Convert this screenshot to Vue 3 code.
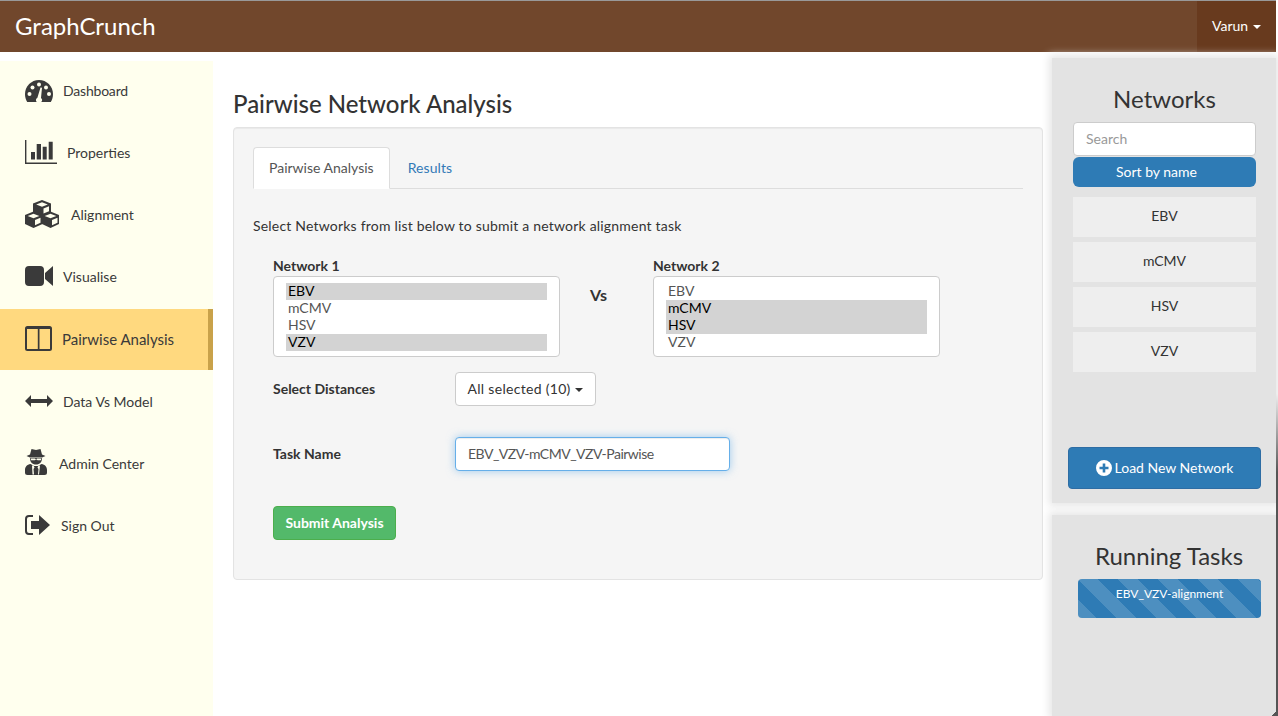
<script setup>
const navItems = [
  { label: 'Dashboard', icon: 'dash' },
  { label: 'Properties', icon: 'bars' },
  { label: 'Alignment', icon: 'cubes' },
  { label: 'Visualise', icon: 'video' },
  { label: 'Pairwise Analysis', icon: 'cols', active: true },
  { label: 'Data Vs Model', icon: 'arrows' },
  { label: 'Admin Center', icon: 'spy' },
  { label: 'Sign Out', icon: 'out' }
]
const list1 = [
  { n: 'EBV', s: true }, { n: 'mCMV' }, { n: 'HSV' }, { n: 'VZV', s: true }
]
const list2 = [
  { n: 'EBV' }, { n: 'mCMV', s: true }, { n: 'HSV', s: true }, { n: 'VZV' }
]
const networks = ['EBV', 'mCMV', 'HSV', 'VZV']
</script>

<template>
  <div class="page">
    <header class="topbar">
      <div class="brand">GraphCrunch</div>
      <div class="user">Varun <span class="caret white"></span></div>
    </header>
    <div class="layout">
      <aside class="sidebar">
        <a v-for="item in navItems" :key="item.label" class="nav-item" :class="['i-' + item.icon, { active: item.active }]">
          <svg v-if="item.icon === 'dash'" class="nav-icon" width="28" height="22" viewBox="0 0 28 22">
            <path fill="#3a3a3a" d="M14 0C6.300 0 0 6.300 0 14c0 3 .8 5.700 2.200 8h23.600c1.400-2.300 2.200-5 2.200-8C28 6.300 21.700 0 14 0z"/>
            <g fill="#ffffee">
              <circle cx="14" cy="4.500" r="2"/><circle cx="7.500" cy="7.500" r="2"/><circle cx="21" cy="7.500" r="2"/>
              <circle cx="4.500" cy="14" r="2"/><circle cx="24" cy="14" r="2"/>
              <path d="M15.500 7.500l1.500.3-1 10.200a2.900 2.900 0 1 1-3.600-.3z"/>
            </g>
          </svg>
          <svg v-else-if="item.icon === 'bars'" class="nav-icon" width="32" height="24" viewBox="0 0 32 24" fill="#3a3a3a">
            <path d="M0 0h1.400v22.400H32V24H0zM6 12h4v7.500H6zM11.700 4H16v15.500h-4.300zM17.700 6.700h4v12.800h-4zM23.700 1.700h4v17.800h-4z"/>
          </svg>
          <svg v-else-if="item.icon === 'cubes'" class="nav-icon" width="34" height="28" viewBox="0 0 34 28">
            <g fill="#3a3a3a">
              <path d="M17 0l9 3.500V13l-9 4-9-4V3.500z"/>
              <path d="M8.500 11.500l9 3.500v9l-9 4-8.500-4v-9z"/>
              <path d="M25.500 11.500l8.500 3.500v9l-8.500 4-8.500-4v-9z"/>
            </g>
            <g fill="#ffffee">
              <path d="M17 2.200l5.800 2.300L17 6.800l-5.800-2.300z"/>
              <path d="M8.500 13.700l5.800 2.300-5.800 2.300L2.700 16z"/>
              <path d="M25.500 13.700l5.800 2.300-5.800 2.300-5.800-2.300z"/>
              <path d="M18.500 8.500l5.500-2.200v5l-5.500 2.300z"/>
              <path d="M10 20l5.500-2.200v5L10 25.200z"/>
              <path d="M27 20l5.500-2.200v5L27 25.200z"/>
            </g>
          </svg>
          <svg v-else-if="item.icon === 'video'" class="nav-icon" width="28" height="20" viewBox="0 0 28 20" fill="#3a3a3a">
            <path d="M0 4a4 4 0 0 1 4-4h11a4 4 0 0 1 4 4v12a4 4 0 0 1-4 4H4a4 4 0 0 1-4-4zM20 7l8-7v20l-8-7z"/>
          </svg>
          <svg v-else-if="item.icon === 'cols'" class="nav-icon" width="27" height="25" viewBox="0 0 27 25" fill="#3a3a3a">
            <path fill-rule="evenodd" d="M2.500 0h22A2.500 2.500 0 0 1 27 2.500v20a2.500 2.500 0 0 1-2.500 2.500h-22A2.500 2.500 0 0 1 0 22.500v-20A2.500 2.500 0 0 1 2.500 0zM2 3v20h10.800V3zm12.500 0v20H25V3z"/>
          </svg>
          <svg v-else-if="item.icon === 'arrows'" class="nav-icon" width="28" height="12" viewBox="0 0 28 12" fill="#3a3a3a">
            <path d="M0 6l6-6v4h16V0l6 6-6 6V8H6v4z"/>
          </svg>
          <svg v-else-if="item.icon === 'spy'" class="nav-icon" width="22" height="26" viewBox="0 0 22 26">
            <path fill="#3a3a3a" d="M6.500 0l4.500 1L15.500 0l1.500 5.500 3.500 1.500-3.500 1.500H5L1.500 7 5 5.500z"/>
            <path fill="#3a3a3a" d="M5 9h12c.3 3.800-2.300 6.500-6 6.500S4.700 12.800 5 9z"/>
            <path fill="#3a3a3a" d="M5.500 15C2 15.500 0 18 0 21v2.500A2.500 2.500 0 0 0 2.500 26h17a2.500 2.500 0 0 0 2.500-2.500V21c0-3-2-5.500-5.500-6L13 17H9z"/>
            <path fill="#ffffee" d="M7 16.500l1.500 0 1 2-1 1.500 .5 5.500H7.500zM15 16.500l-1.500 0-1 2 1 1.500-.5 5.500h1z"/>
            <path fill="#ffffee" d="M5.500 9.500h4.500l1 1 1-1h4.500l-.6 1.800h-3.200l-1.500-.8-1.500.8H6.100z"/>
          </svg>
          <svg v-else class="nav-icon" width="25" height="20" viewBox="0 0 25 20" fill="#3a3a3a">
            <path d="M8 0H4a4 4 0 0 0-4 4v12a4 4 0 0 0 4 4h4v-2H4a2 2 0 0 1-2-2V4a2 2 0 0 1 2-2h4zM6 6h8V0l11 10-11 10v-6H6z"/>
          </svg>
          <span class="nav-label">{{ item.label }}</span>
        </a>
      </aside>

      <main class="main">
        <h1 class="title">Pairwise Network Analysis</h1>
        <section class="well">
          <div class="tabs">
            <div class="tab current">Pairwise Analysis</div>
            <div class="tab link">Results</div>
          </div>
          <p class="intro">Select Networks from list below to submit a network alignment task</p>
          <div class="picker-row">
            <div class="picker">
              <label class="bold picker-label">Network 1</label>
              <div class="listbox">
                <div v-for="o in list1" :key="o.n" class="opt" :class="{ sel: o.s }">{{ o.n }}</div>
              </div>
            </div>
            <div class="vs">Vs</div>
            <div class="picker">
              <label class="bold picker-label">Network 2</label>
              <div class="listbox">
                <div v-for="o in list2" :key="o.n" class="opt" :class="{ sel: o.s }">{{ o.n }}</div>
              </div>
            </div>
          </div>
          <div class="field dist">
            <label class="bold field-label">Select Distances</label>
            <button class="dropdown">All selected (10) <span class="caret"></span></button>
          </div>
          <div class="field task">
            <label class="bold field-label">Task Name</label>
            <div class="task-input">EBV_VZV-mCMV_VZV-Pairwise</div>
          </div>
          <button class="submit">Submit Analysis</button>
        </section>
      </main>

      <aside class="rail">
        <section class="panel networks">
          <h2 class="panel-title">Networks</h2>
          <div class="search">Search</div>
          <div class="sort">Sort by name</div>
          <div v-for="n in networks" :key="n" class="net">{{ n }}</div>
          <button class="load">
            <svg class="plus" viewBox="0 0 16 16"><path fill="#fff" fill-rule="evenodd" d="M8 0a8 8 0 1 1 0 16A8 8 0 0 1 8 0zM6.700 3.500v3.200H3.500v2.600h3.200v3.200h2.600V9.300h3.200V6.700H9.300V3.500z"/></svg>
            <span>Load New Network</span>
          </button>
        </section>
        <section class="panel tasks">
          <h2 class="panel-title">Running Tasks</h2>
          <div class="progress">EBV_VZV-alignment</div>
        </section>
      </aside>
    </div>
  </div>
</template>

<style>
html, body { margin: 0; background: #fff; overflow: hidden; }
</style>

<style scoped>
.page {
  position: relative;
  width: 1278px;
  height: 716px;
  box-sizing: border-box;
  padding-right: 2px;
  overflow: hidden;
  font-family: "Lato", "Noto Sans", sans-serif;
  font-size: 14px;
  color: #333;
  display: flex;
  flex-direction: column;
}
.page::after {
  content: "";
  position: absolute;
  right: 0;
  top: 0;
  bottom: 0;
  width: 2px;
  background: linear-gradient(to bottom, transparent 55%, #555 66%);
}
.topbar {
  height: 51px;
  flex: none;
  background: #71472c;
  border-top: 1px solid #999;
  display: flex;
  justify-content: space-between;
  color: #fff;
}
.brand { font-size: 24px; line-height: 50px; padding-left: 15px; }
.user {
  width: 79px;
  padding-left: 15px;
  box-sizing: border-box;
  background: #683a1e;
  line-height: 50px;
  white-space: nowrap;
}
.caret {
  display: inline-block;
  width: 0;
  height: 0;
  margin-left: 1px;
  vertical-align: middle;
  border-top: 4px solid #333;
  border-left: 4px solid transparent;
  border-right: 4px solid transparent;
}
.caret.white { border-top-color: #fff; }
.layout { flex: 1; display: flex; min-height: 0; }
.sidebar {
  width: 213px;
  flex: none;
  margin-top: 9px;
  background: #ffffee;
}
.nav-item {
  height: 62px;
  box-sizing: border-box;
  padding-left: 25px;
  display: flex;
  align-items: center;
  color: #3a3a3a;
}
.nav-item.active {
  height: 61px;
  margin-bottom: 1px;
  background: #ffd97f;
  border-right: 5px solid #c9a24a;
}
.nav-icon { flex: none; }
.nav-label { padding-bottom: 2px; }
.i-dash .nav-label, .i-bars .nav-label, .i-cubes .nav-label, .i-video .nav-label { padding-bottom: 4px; }
.i-dash .nav-label { margin-left: 10px; letter-spacing: -.2px; }
.i-dash .nav-icon { margin-bottom: 2px; }
.i-bars .nav-label { margin-left: 10px; }
.i-bars .nav-icon { margin-bottom: 4px; }
.i-cubes .nav-label { margin-left: 12px; }
.i-cubes .nav-icon { margin-bottom: 4px; }
.i-video .nav-label { margin-left: 10px; }
.i-video .nav-icon { margin-bottom: 4px; }
.i-cols .nav-label { margin-left: 10px; font-size: 15px; padding-bottom: 2px; }
.i-cols .nav-icon { margin-bottom: 2px; }
.i-arrows .nav-label { margin-left: 10px; }
.i-arrows .nav-icon { margin-bottom: 2px; }
.i-spy .nav-label { margin-left: 12px; }
.i-spy .nav-icon { margin-bottom: 4px; }
.i-out .nav-label { margin-left: 11px; }
.i-out .nav-icon { margin-bottom: 2px; }
.main { width: 810px; margin-left: 20px; flex: none; }
.title {
  margin: 37px 0 8px;
  font-size: 24px;
  line-height: 30px;
  font-weight: 500;
}
.well {
  height: 453px;
  box-sizing: border-box;
  padding: 19px;
  background: #f5f5f5;
  border: 1px solid #e3e3e3;
  border-radius: 4px;
  box-shadow: inset 0 1px 1px rgba(0, 0, 0, .05);
}
.tabs {
  display: flex;
  height: 41px;
  border-bottom: 1px solid #ddd;
}
.tab { padding: 0 15px; height: 42px; line-height: 42px; box-sizing: border-box; margin-right: 3px; }
.tab.current {
  background: #fff;
  border: 1px solid #ddd;
  border-bottom-color: #fff;
  border-radius: 4px 4px 0 0;
  color: #555;
  line-height: 40px;
}
.tab.link { color: #337ab7; letter-spacing: .1px; }
.intro { margin: 27px 0 0; line-height: 20px; letter-spacing: .2px; }
.bold { font-weight: 700; }
.picker-row { display: flex; margin: 20px 0 0 20px; }
.picker { width: 287px; }
.picker-label { display: block; line-height: 20px; }
.listbox {
  height: 81px;
  box-sizing: border-box;
  padding: 6px 12px 0;
  background: #fff;
  border: 1px solid #ccc;
  border-radius: 4px;
  color: #555;
}
.opt { height: 17px; line-height: 15px; padding-left: 2px; }
.opt.sel { background: #d3d3d3; color: #000; }
.vs { width: 93px; font-size: 16px; font-weight: 700; line-height: 20px; padding: 29px 0 0 30px; box-sizing: border-box; color: #333; }
.field { display: flex; align-items: center; margin-left: 20px; }
.field-label { width: 182px; flex: none; padding-bottom: 2px; }
.dist { margin-top: 15px; }
.task { margin-top: 31px; }
.dropdown {
  width: 141px;
  height: 34px;
  padding: 0 0 2px;
  background: #fff;
  border: 1px solid #ccc;
  border-radius: 4px;
  font: inherit;
  letter-spacing: .3px;
  color: #333;
}
.task-input {
  width: 275px;
  height: 34px;
  line-height: 32px;
  box-sizing: border-box;
  padding: 0 12px;
  background: #fff;
  border: 1px solid #66afe9;
  border-radius: 4px;
  color: #555;
  letter-spacing: -.5px;
  box-shadow: inset 0 1px 1px rgba(0, 0, 0, .075), 0 0 8px rgba(102, 175, 233, .6);
}
.submit {
  display: block;
  width: 123px;
  height: 34px;
  margin: 35px 0 0 20px;
  padding: 0 0 2px;
  background: #53b96a;
  border: 1px solid #4cae4c;
  border-radius: 4px;
  color: #fff;
  font: inherit;
  font-weight: 700;
}
.rail { width: 224px; margin-left: 9px; margin-top: 6px; flex: none; display: flex; flex-direction: column; gap: 12px; }
.panel {
  background: #e3e3e3;
  box-shadow: 0 0 8px 3px #e6e6e6;
  box-sizing: border-box;
  text-align: center;
}
.networks { height: 445px; padding: 26px 20px 0 21px; }
.tasks {
  flex: 1;
  padding-top: 26px;
  background: linear-gradient(135deg, transparent 50%, #555 50%) right bottom / 4px 4px no-repeat, #e3e3e3;
}
.tasks .panel-title { padding-left: 10px; }
.panel-title { margin: 0; font-size: 24px; font-weight: 400; line-height: 30px; color: #333; }
.networks .panel-title { margin-bottom: 8px; }
.search {
  height: 34px;
  box-sizing: border-box;
  padding: 0 12px;
  line-height: 32px;
  text-align: left;
  color: #999;
  background: #fff;
  border: 1px solid #ccc;
  border-radius: 4px;
}
.sort {
  height: 30px;
  margin-top: 1px;
  line-height: 30px;
  background: #2e7bb5;
  color: #fff;
  border-radius: 6px;
  text-align: left;
  padding-left: 43px;
  margin-bottom: 10px;
}
.net {
  height: 40px;
  line-height: 38px;
  margin-bottom: 5px;
  background: #eee;
}
.load {
  width: 193px;
  height: 42px;
  margin: 75px 0 0 -5px;
  padding: 0 0 2px;
  background: #2e7bb5;
  border: 1px solid #2e6da4;
  border-radius: 4px;
  color: #fff;
  font: inherit;
  display: flex;
  align-items: center;
  justify-content: center;
  gap: 3px;
}
.plus { width: 16px; height: 16px; margin-top: 2px; }
.progress {
  width: 183px;
  height: 39px;
  margin: 8px 0 0 26px;
  line-height: 30px;
  font-size: 12px;
  color: #fff;
  background-color: #2e7bb5;
  background-image: linear-gradient(45deg, rgba(255,255,255,.15) 25%, transparent 25%, transparent 50%, rgba(255,255,255,.15) 50%, rgba(255,255,255,.15) 75%, transparent 75%, transparent);
  background-size: 40px 40px;
  border-radius: 4px;
}
</style>
